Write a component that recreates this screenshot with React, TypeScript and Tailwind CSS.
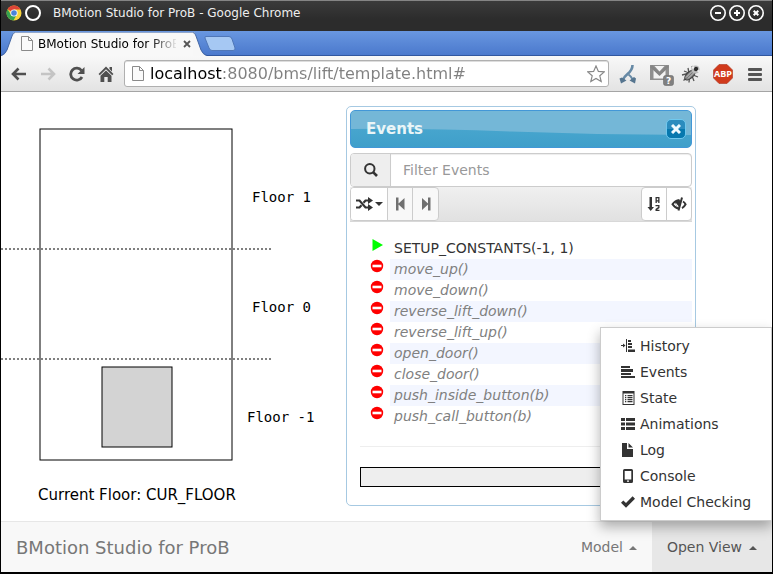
import type { ReactNode } from "react";

const events = [
  "SETUP_CONSTANTS(-1, 1)",
  "move_up()",
  "move_down()",
  "reverse_lift_down()",
  "reverse_lift_up()",
  "open_door()",
  "close_door()",
  "push_inside_button(b)",
  "push_call_button(b)",
];

function Glyph({ children, className = "size-[14px]", box = 14 }: { children: ReactNode; className?: string; box?: number }) {
  return (
    <svg aria-hidden="true" viewBox={`0 0 ${box} ${box}`} className={`shrink-0 ${className}`} fill="currentColor">
      {children}
    </svg>
  );
}

const views: { label: string; icon: ReactNode }[] = [
  {
    label: "History",
    icon: <path d="M0 6h2V4.500L4.500 6.500 2 8.500V7H0zM5 0h1v13H5zM7 1h3v2H7zM7 4h4v2H7zM7 7h4v2H7zM7 10.500h7v2.500H7z" />,
  },
  { label: "Events", icon: <path d="M0 1h9v2H0zM0 4h12v3H0zM0 8h10v2H0zM0 11h14v2H0z" /> },
  {
    label: "State",
    icon: (
      <path
        fillRule="evenodd"
        d="M1 0h12v14H1zM2 2.500v10.500h10V2.500zM3.500 4h1.300v1.200H3.500zM6 4h5v1.200H6zM3.500 6h1.300v1.200H3.500zM6 6h5v1.200H6zM3.500 8h1.300v1.200H3.500zM6 8h5v1.200H6zM3.500 10h1.300v1.200H3.500zM6 10h5v1.200H6z"
        transform="translate(.5)"
      />
    ),
  },
  { label: "Animations", icon: <path d="M0 1h4v3H0zM5 1h9v3H5zM0 5.500h4v3H0zM5 5.500h9v3H5zM0 10h4v3H0zM5 10h9v3H5z" /> },
  { label: "Log", icon: <path d="M1 0h5v6h6v8H1zM7.500 0L12 4.600H7.500z" /> },
  {
    label: "Console",
    icon: (
      <path
        fillRule="evenodd"
        d="M3.500 0h7Q12 0 12 1.500v11q0 1.500-1.500 1.500h-7Q2 14 2 12.500v-11Q2 0 3.500 0zM3.700 2v8.600h6.600V2zM6 11.600v1.200h2v-1.200z"
      />
    ),
  },
  { label: "Model Checking", icon: <path d="M0 7.800L2.300 5.400 5 8 11.600 1.300 14 3.700 5 12.700z" /> },
];

function PageIcon() {
  return (
    <svg aria-hidden="true" viewBox="0 0 12 15" className="h-[15px] w-3 shrink-0" fill="#fafafa" stroke="#8a8a8a">
      <path d="M.5.5h7l4 4v10H.5zM7.500.5v4h4" />
    </svg>
  );
}

function TitleBar() {
  const controls = [
    { label: "Minimize", d: "M5 8h6" },
    { label: "Maximize", d: "M5 8h6M8 5v6" },
    { label: "Close", d: "M5.700 5.700l4.600 4.600M10.300 5.700l-4.600 4.600" },
  ];
  return (
    <header className="flex h-[31px] items-center border-t border-[#858585] bg-linear-to-b from-[#3b3b3b] to-[#2c2c2c] to-60% pr-2 pb-[6px] pl-[5px] text-[#eee]">
      <svg aria-hidden="true" viewBox="0 0 16 16" className="size-4">
        <circle cx="8" cy="8" r="7.500" fill="#f8d33a" />
        <path d="M8 8L1.500 4.200A7.500 7.500 0 0 1 14.500 4.500H8z" fill="#dc4437" />
        <path d="M1.500 4.200A7.500 7.500 0 0 0 7.500 15.500L10.500 10 5 9.500z" fill="#35a250" />
        <circle cx="8" cy="8" r="3.600" fill="#fff" />
        <circle cx="8" cy="8" r="2.800" fill="#4a83d8" />
      </svg>
      <svg aria-hidden="true" viewBox="0 0 16 16" className="ml-[3px] size-4" fill="none" stroke="#fff" strokeWidth="2">
        <circle cx="8" cy="8" r="7" />
      </svg>
      <h1 className="ml-3 flex-1 text-[12px] leading-4">BMotion Studio for ProB - Google Chrome</h1>
      <div className="flex gap-[3px]">
        {controls.map((c) => (
          <button key={c.label} aria-label={c.label}>
            <svg viewBox="0 0 16 16" className="size-4" fill="none" stroke="#fff" strokeWidth="2">
              <circle cx="8" cy="8" r="7.200" strokeWidth="1.600" />
              <path d={c.d} />
            </svg>
          </button>
        ))}
      </div>
    </header>
  );
}

function TabStrip() {
  return (
    <div className="flex h-[25px] items-end border-b border-[#31579f] bg-linear-to-b from-[#6997e0] to-[#4b79cd]">
      <div className="-mb-px flex h-6 items-stretch">
        <svg aria-hidden="true" viewBox="0 0 14 24" className="h-6 w-[14px]">
          <path d="M0 24Q4 23 6 18L11 4Q12 0 14 0V24z" fill="#f7f7f7" />
          <path d="M0 23.500Q4 22.500 6 18L11 4Q12 .5 14 .5" fill="none" stroke="#4467a5" />
        </svg>
        <div className="flex w-[178px] items-center border-t border-[#8fa6cc] bg-[#f8f8f8] pb-[2px] pl-[6px]">
          <PageIcon />
          <span className="ml-[5px] w-[138px] overflow-hidden text-[12px] leading-4 whitespace-nowrap text-black [mask-image:linear-gradient(90deg,#000_112px,transparent_140px)]">
            BMotion Studio for ProB
          </span>
          <button aria-label="Close tab" className="ml-[7px]">
            <svg viewBox="0 0 8 8" className="size-2" stroke="#555" strokeWidth="1.800">
              <path d="M1 1l6 6M7 1L1 7" />
            </svg>
          </button>
        </div>
        <svg aria-hidden="true" viewBox="0 0 14 24" className="h-6 w-[14px]">
          <path d="M14 24Q10 23 8 18L3 4Q2 0 0 0V24z" fill="#f7f7f7" />
          <path d="M14 23.500Q10 22.500 8 18L3 4Q2 .5 0 .5" fill="none" stroke="#4467a5" />
        </svg>
      </div>
      <button aria-label="New tab" className="-ml-[3px] mb-1">
        <svg viewBox="0 0 32 15" className="h-[15px] w-8" fill="#a6c8f3" stroke="#5077b8">
          <path d="M2 .5H25Q27 .5 28 3L31 12Q31.500 14.500 29 14.500H8Q6 14.500 5 12L1 2Q.5.5 2 .5z" />
        </svg>
      </button>
    </div>
  );
}

function BrowserToolbar() {
  return (
    <div className="flex h-9 items-center border-b border-[#a5a5a5] bg-linear-to-b from-[#f8f8f8] to-[#e3e3e3] px-[10px]">
      <div className="flex gap-[13px] text-[#505050]">
        <button aria-label="Back">
          <Glyph box={16} className="size-4">
            <path d="M7.500 2.500L2 8l5.500 5.500M2 8h13" fill="none" stroke="currentColor" strokeWidth="2.600" />
          </Glyph>
        </button>
        <button aria-label="Forward" className="text-[#c4c4c4]">
          <Glyph box={16} className="size-4">
            <path d="M8.500 2.500L14 8l-5.500 5.500M14 8H1" fill="none" stroke="currentColor" strokeWidth="2.600" />
          </Glyph>
        </button>
        <button aria-label="Reload">
          <Glyph box={16} className="size-4">
            <path d="M13 11A6 6 0 1 1 12.500 4.500" fill="none" stroke="currentColor" strokeWidth="2.800" />
            <path d="M15.500 1v7H8.500z" />
          </Glyph>
        </button>
        <button aria-label="Home">
          <Glyph box={16} className="size-4">
            <path d="M8 .5L15.500 8l-1.300 1.300L8 3.200 1.800 9.300.5 8zM11.500 1H14v4.500L11.500 3zM2.500 9.700L8 4.400l5.500 5.300V16H9.700v-5H6.300v5H2.500z" />
          </Glyph>
        </button>
      </div>
      <div className="ml-[10px] flex h-[27px] flex-1 items-center rounded-[3px] border border-[#b0b0b0] bg-white pr-[3px] pl-[7px] shadow-[inset_0_1px_0_#ddd]">
        <PageIcon />
        <input
          aria-label="Address"
          defaultValue="localhost:8080/bms/lift/template.html#"
          className="ml-[6px] min-w-0 flex-1 bg-[linear-gradient(90deg,#000_72px,#808080_72px)] bg-clip-text text-[16px] leading-5 text-transparent outline-none"
        />
        <button aria-label="Bookmark this page">
          <svg viewBox="0 0 18 18" className="size-[18px]" fill="#fff" stroke="#888" strokeWidth="1.200">
            <path d="M9 1l2.400 5.400 5.900.5-4.500 3.900 1.400 5.800L9 13.500l-5.200 3.100 1.400-5.800L.7 6.900l5.900-.5z" />
          </svg>
        </button>
      </div>
      <div className="ml-[10px] flex items-center">
        <button aria-label="Split extension">
          <svg viewBox="0 0 18 20" className="h-5 w-[18px]" fill="none" stroke="#6689a5" strokeWidth="2.600">
            <path d="M13.500 1C13.500 6 11 8 8.500 10S5 13 4 16" />
            <path d="M9.500 10.500q3 2 4.500 5.500" strokeWidth="2" />
            <path d="M.500 14.500L3 13.500l4.500 3L2 19.500zM17 14.500L15 13l-4.500 3.500 5.500 3z" fill="#56758f" stroke="none" />
          </svg>
        </button>
        <button aria-label="Mail" className="ml-3">
          <svg viewBox="0 0 26 24" className="h-6 w-[26px]">
            <path d="M1 3h19v15H1z" fill="#8f8f8f" />
            <path d="M4.500 7v9.500h12V7l-6 6z" fill="#f3f3f3" />
            <path d="M5.500 4L10.500 9.500 15.500 4z" fill="#f3f3f3" />
            <path d="M2 4l8.500 8L19 4" fill="none" stroke="#858585" strokeWidth="3" />
            <rect x="14.500" y="13.500" width="10" height="10" rx="2" fill="#808080" stroke="#6b6b6b" strokeWidth=".6" />
            <text x="19.500" y="22" fontSize="9" fontWeight="bold" textAnchor="middle" fill="#fff">?</text>
          </svg>
        </button>
        <button aria-label="Bug tool" className="ml-[6px]">
          <svg viewBox="0 0 20 20" className="size-5">
            <path d="M1 11l6-1.500M2.500 16.500l4-3.500M8 18.500L8.500 13M7 4l1 5M3 7l5 2M13 17l-2-5M17 13l-5-2M11 2l1 5" stroke="#555" strokeWidth="1.300" />
            <ellipse cx="9" cy="11" rx="6.500" ry="3.200" transform="rotate(-42 9 11)" fill="#7c7c7c" stroke="#3c3c3c" />
            <path d="M5 13.500l6-6M7 14.500l6-6" stroke="#ddd" strokeWidth=".8" />
            <circle cx="14.500" cy="5.500" r="4" fill="#bbb" />
            <circle cx="15" cy="5" r="2.200" fill="#2d2d2d" />
            <circle cx="12" cy="3.500" r="1.300" fill="#f1f1f1" />
            <circle cx="17.500" cy="7" r="1.200" fill="#eee" />
          </svg>
        </button>
        <button aria-label="Ad blocker" className="ml-3">
          <svg viewBox="0 0 20 20" className="size-5">
            <path d="M6 .5h8L19.500 6v8L14 19.500H6L.5 14V6z" fill="#d13a1c" stroke="#ad3520" strokeWidth=".6" />
            <text x="10" y="13" fontSize="9" fontWeight="bold" textAnchor="middle" fill="#fff" className="font-['Open_Sans',sans-serif]">ABP</text>
          </svg>
        </button>
        <button aria-label="Menu" className="ml-[15px]">
          <svg viewBox="0 0 14 14" className="size-[14px]" fill="#555">
            <rect y="1" width="14" height="3" rx="1" />
            <rect y="6" width="14" height="3" rx="1" />
            <rect y="11" width="14" height="3" rx="1" />
          </svg>
        </button>
      </div>
    </div>
  );
}

function LiftDrawing() {
  return (
    <svg role="img" aria-label="Lift" viewBox="0 0 345 420" className="h-[420px] w-[345px] shrink-0" stroke="#000" fill="none">
      <rect x="39" y="37" width="192" height="331" />
      <path d="M0 157H270M0 267H270" strokeDasharray="2 2" />
      <rect x="101" y="275" width="70" height="80" fill="#d3d3d3" />
      <g fill="#000" stroke="none" fontSize="14" className="font-['DejaVu_Sans_Mono',monospace]">
        <text x="251" y="110">Floor 1</text>
        <text x="251" y="220">Floor 0</text>
        <text x="246" y="330">Floor -1</text>
      </g>
      <text x="37" y="408" fill="#000" stroke="none" fontSize="15">
        Current Floor: CUR_FLOOR
      </text>
    </svg>
  );
}

function EventsDialog() {
  return (
    <section aria-labelledby="events-title" className="mt-[14px] h-[400px] w-[350px] shrink-0 rounded-[5px] border border-[#a6c9e2] bg-white p-[3px]">
      <div className="relative flex h-[38px] items-center justify-between overflow-hidden rounded-[5px] border border-[#4297d7] bg-linear-to-b from-[#4fabd1] to-[#3f9fca] pr-[5px] pl-[15px]">
        <svg aria-hidden="true" viewBox="0 0 340 36" preserveAspectRatio="none" className="absolute inset-0 size-full">
          <path d="M0 0H340V24Q250 24 160 20.500T0 18z" fill="#74b7d7" />
        </svg>
        <h2 id="events-title" className="relative text-[15px] leading-5 font-bold text-[#eaf5f7]">Events</h2>
        <button aria-label="Close" className="relative flex size-5 items-center justify-center rounded-[5px] border border-[#6fc8ee] bg-linear-to-b from-[#2b8cbe] from-50% to-[#0678ae] to-50%">
          <svg viewBox="0 0 10 10" className="size-[10px]" stroke="#eefaff" strokeWidth="3">
            <path d="M1 1l8 8M9 1L1 9" />
          </svg>
        </button>
      </div>
      <div className="mt-[5px] flex h-[34px] rounded-[4px] border border-[#ccc]">
        <label htmlFor="filter" aria-label="Filter Events" className="flex w-10 items-center justify-center rounded-l-[3px] border-r border-[#ccc] bg-[#eee] text-[#333]">
          <Glyph>
            <circle cx="5.800" cy="5.800" r="4.700" fill="none" stroke="currentColor" strokeWidth="2" />
            <path d="M8.800 8.800l4.200 4.200" stroke="currentColor" strokeWidth="2.600" />
          </Glyph>
        </label>
        <input id="filter" placeholder="Filter Events" className="min-w-0 flex-1 rounded-r-[3px] px-3 text-[14px] text-[#555] shadow-[inset_0_1px_1px_rgba(0,0,0,.075)] outline-none placeholder:text-[#999]" />
      </div>
      <div className="flex h-[35px] items-start justify-between border-b border-[#d8d8d8] bg-linear-to-b from-[#f0f0f0] to-[#e1e1e1]">
        <div className="flex h-[34px] divide-x divide-[#ccc] rounded-[4px] border border-[#ccc] bg-[#f8f8f8]">
          <button aria-label="Random event" className="flex w-[37px] items-center justify-center gap-[2px] rounded-l-[3px] bg-white text-[#333]">
            <svg viewBox="0 0 17 14" className="h-[14px] w-[17px]" fill="none" stroke="currentColor" strokeWidth="2.200">
              <path d="M0 3.500h3.500l6 7H13M0 10.500h3.500l2-2.300M7.500 5.800l2-2.300H13" />
              <path d="M12 0v7l5-3.500zM12 7v7l5-3.500z" fill="currentColor" stroke="none" />
            </svg>
            <span className="border-x-4 border-t-4 border-x-transparent border-t-[#333]" />
          </button>
          <button aria-label="Step back" className="flex w-[25px] items-center justify-center text-[#707070]">
            <Glyph>
              <path d="M3 .5h2.500v6L11.500 1v12L5.500 7.500v6H3z" />
            </Glyph>
          </button>
          <button aria-label="Step forward" className="flex w-[25px] items-center justify-center text-[#707070]">
            <Glyph>
              <path d="M11.500.5H9v6L3 1v12l6-5.500v6h2.500z" />
            </Glyph>
          </button>
        </div>
        <div className="flex h-[34px] divide-x divide-[#ccc] rounded-[4px] border border-[#ccc] bg-white text-[#333]">
          <button aria-label="Sort" className="flex w-[25px] items-center justify-center">
            <Glyph>
              <path d="M2.500 0h2.500v10h2L3.700 14 .5 10h2zM8.500 0h4v6h-1.300V4.500H9.800V6H8.500zM9.800 1.200v2h1.400v-2zM8.500 8h4v3l-2.500 1.800h2.500V14h-4v-2l2.700-2V9.200H8.500z" fillRule="evenodd" />
            </Glyph>
          </button>
          <button aria-label="Hide disabled events" className="flex w-[24px] items-center justify-center">
            <svg viewBox="0 0 16 14" className="h-[14px] w-4" fill="none" stroke="currentColor" strokeWidth="2">
              <path d="M7.500 11.500Q4 11 1.500 7.300 4 3.500 8.500 3M12 4.500Q13.800 5.500 14.600 7.300 13 10.200 11 11.200M11 .5L7.500 13.500" />
              <path d="M4 4.500Q7 2 10 3.500L8.500 9.500Q4.500 9.500 4 4.500z" fill="currentColor" stroke="none" />
              <path d="M5.200 6.500Q5.500 8.500 7.200 8.800" stroke="#fff" strokeWidth="1" />
            </svg>
          </button>
        </div>
      </div>
      <ul className="mt-4 text-[14px] leading-[21px]">
        {events.map((name, i) => (
          <li key={name} className="flex">
            <span className="flex w-10 justify-center pl-[14px]">
              {i === 0 ? (
                <Glyph>
                  <path d="M2.500 1v12L13 7z" fill="#0f0" />
                </Glyph>
              ) : (
                <Glyph>
                  <circle cx="7" cy="7" r="6.200" fill="#f00" />
                  <path d="M2.500 5.700h9v2.600h-9z" fill="#fff" />
                </Glyph>
              )}
            </span>
            <span className={`flex-1 pl-1 ${i === 0 ? "text-[#333]" : "text-[#808080] italic"} ${i % 2 ? "bg-[#f3f6ff]" : ""}`}>{name}</span>
          </li>
        ))}
      </ul>
      <hr className="mx-[10px] mt-[19px] border-[#eee]" />
      <div role="progressbar" aria-label="Progress" className="mx-[10px] mt-5 h-5 border border-black bg-[#eee]" />
    </section>
  );
}

function Footer() {
  return (
    <footer className="flex h-[51px] items-stretch border-t border-[#e7e7e7] bg-[#f8f8f8] text-[14px] text-[#777]">
      <a href="#" className="flex flex-1 items-center pl-[15px] text-[18px]">BMotion Studio for ProB</a>
      <button className="flex items-center gap-[6px] px-[15px]">
        Model
        <span className="mt-[2px] border-x-4 border-b-4 border-x-transparent border-b-[#777]" />
      </button>
      <div className="relative flex">
        <button aria-expanded="true" className="flex items-center gap-[7px] bg-[#e7e7e7] px-[15px] text-[#555]">
          Open View
          <span className="mt-[2px] border-x-4 border-b-4 border-x-transparent border-b-[#555]" />
        </button>
        <ul className="absolute right-0 bottom-full mb-px w-[172px] border border-[#ccc] bg-white py-[5px] text-[#333] shadow-[0_6px_12px_rgba(0,0,0,.3)]">
          {views.map((v) => (
            <li key={v.label}>
              <a href="#" className="flex h-[26px] items-center gap-[5px] pl-5 whitespace-nowrap">
                <Glyph>{v.icon}</Glyph>
                {v.label}
              </a>
            </li>
          ))}
        </ul>
      </div>
    </footer>
  );
}

export default function App() {
  return (
    <div className="flex min-h-screen flex-col border-x border-b-2 border-black bg-white font-['DejaVu_Sans',sans-serif]">
      <TitleBar />
      <TabStrip />
      <BrowserToolbar />
      <main className="flex flex-1 items-start">
        <LiftDrawing />
        <EventsDialog />
      </main>
      <Footer />
    </div>
  );
}
